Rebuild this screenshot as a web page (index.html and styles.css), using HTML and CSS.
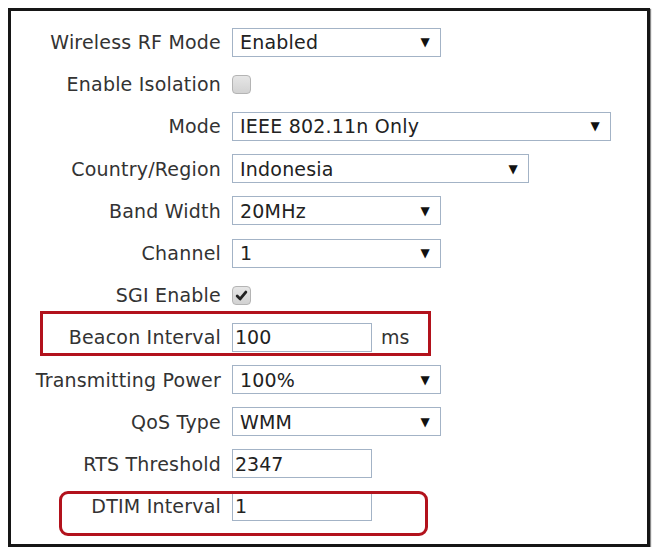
FILE: index.html
```html
<!DOCTYPE html>
<html>
<head>
<meta charset="utf-8">
<link rel="stylesheet" href="styles.css">
</head>
<body>
<div class="panel">
  <div class="form">
    <div class="row"><label class="lbl">Wireless RF Mode</label><div class="ctl"><div class="select w209"><span>Enabled</span><span class="arrow">▼</span></div></div></div>
    <div class="row"><label class="lbl">Enable Isolation</label><div class="ctl"><span class="check"></span></div></div>
    <div class="row"><label class="lbl">Mode</label><div class="ctl"><div class="select w379"><span>IEEE 802.11n Only</span><span class="arrow">▼</span></div></div></div>
    <div class="row"><label class="lbl">Country/Region</label><div class="ctl"><div class="select w297"><span>Indonesia</span><span class="arrow">▼</span></div></div></div>
    <div class="row"><label class="lbl">Band Width</label><div class="ctl"><div class="select w209"><span>20MHz</span><span class="arrow">▼</span></div></div></div>
    <div class="row"><label class="lbl">Channel</label><div class="ctl"><div class="select w209"><span>1</span><span class="arrow">▼</span></div></div></div>
    <div class="row"><label class="lbl">SGI Enable</label><div class="ctl"><span class="check checked"><svg viewBox="0 0 12 12" width="13" height="13"><path d="M2 6.5 L4.8 9.2 L10 2.8" fill="none" stroke="#222" stroke-width="2.6" stroke-linecap="round" stroke-linejoin="round"/></svg></span></div></div>
    <div class="row"><label class="lbl">Beacon Interval</label><div class="ctl"><div class="input">100</div><span class="unit">ms</span></div></div>
    <div class="row"><label class="lbl">Transmitting Power</label><div class="ctl"><div class="select w209"><span>100%</span><span class="arrow">▼</span></div></div></div>
    <div class="row"><label class="lbl">QoS Type</label><div class="ctl"><div class="select w209"><span>WMM</span><span class="arrow">▼</span></div></div></div>
    <div class="row"><label class="lbl">RTS Threshold</label><div class="ctl"><div class="input">2347</div></div></div>
    <div class="row"><label class="lbl">DTIM Interval</label><div class="ctl"><div class="input">1</div></div></div>
  </div>
  <div class="mark mark-beacon"></div>
  <div class="mark mark-dtim"></div>
</div>
</body>
</html>
```
FILE: styles.css
```css
html, body {
  margin: 0;
  padding: 0;
  background: #ffffff;
}
body {
  font-family: "DejaVu Sans", sans-serif;
  color: #333333;
}
.panel {
  position: relative;
  margin: 8px 0 0 8px;
  width: 636px;
  height: 533px;
  border: 3px solid #161616;
  box-shadow: 1px 1px 1px #888;
}
.form {
  padding-top: 10px;
  display: flex;
  flex-direction: column;
}
.row {
  height: 42.2px;
  display: grid;
  grid-template-columns: 210px 1fr;
  column-gap: 11px;
  align-items: center;
}
.lbl {
  text-align: right;
  font-size: 19px;
  letter-spacing: 0.2px;
  color: #333333;
  white-space: nowrap;
}
.ctl {
  display: flex;
  align-items: center;
  gap: 9px;
}
.select {
  box-sizing: border-box;
  height: 29px;
  border: 1px solid #a3b3c6;
  display: flex;
  align-items: center;
  justify-content: space-between;
  padding: 0 10px 0 7px;
  font-size: 19px;
  letter-spacing: 0.2px;
  color: #222222;
}
.w209 { width: 209px; }
.w379 { width: 379px; }
.w297 { width: 297px; }
.arrow {
  font-size: 12px;
  color: #111111;
}
.check {
  box-sizing: border-box;
  width: 19px;
  height: 19px;
  border: 1px solid #b4b4b4;
  border-radius: 4px;
  background: linear-gradient(#e6e6e6, #d2d2d2);
  display: flex;
  align-items: center;
  justify-content: center;
}
.input {
  box-sizing: border-box;
  width: 140px;
  height: 29px;
  border: 1px solid #a3b3c6;
  display: flex;
  align-items: center;
  padding-left: 2px;
  font-size: 19px;
  color: #222222;
}
.unit {
  font-size: 19px;
  color: #333333;
}
.mark {
  position: absolute;
  border: 3px solid #b2121c;
  box-sizing: border-box;
}
.mark-beacon {
  left: 29px;
  top: 300px;
  width: 391px;
  height: 45px;
}
.mark-dtim {
  left: 48px;
  top: 480px;
  width: 369px;
  height: 45px;
  border-radius: 9px;
}
```
